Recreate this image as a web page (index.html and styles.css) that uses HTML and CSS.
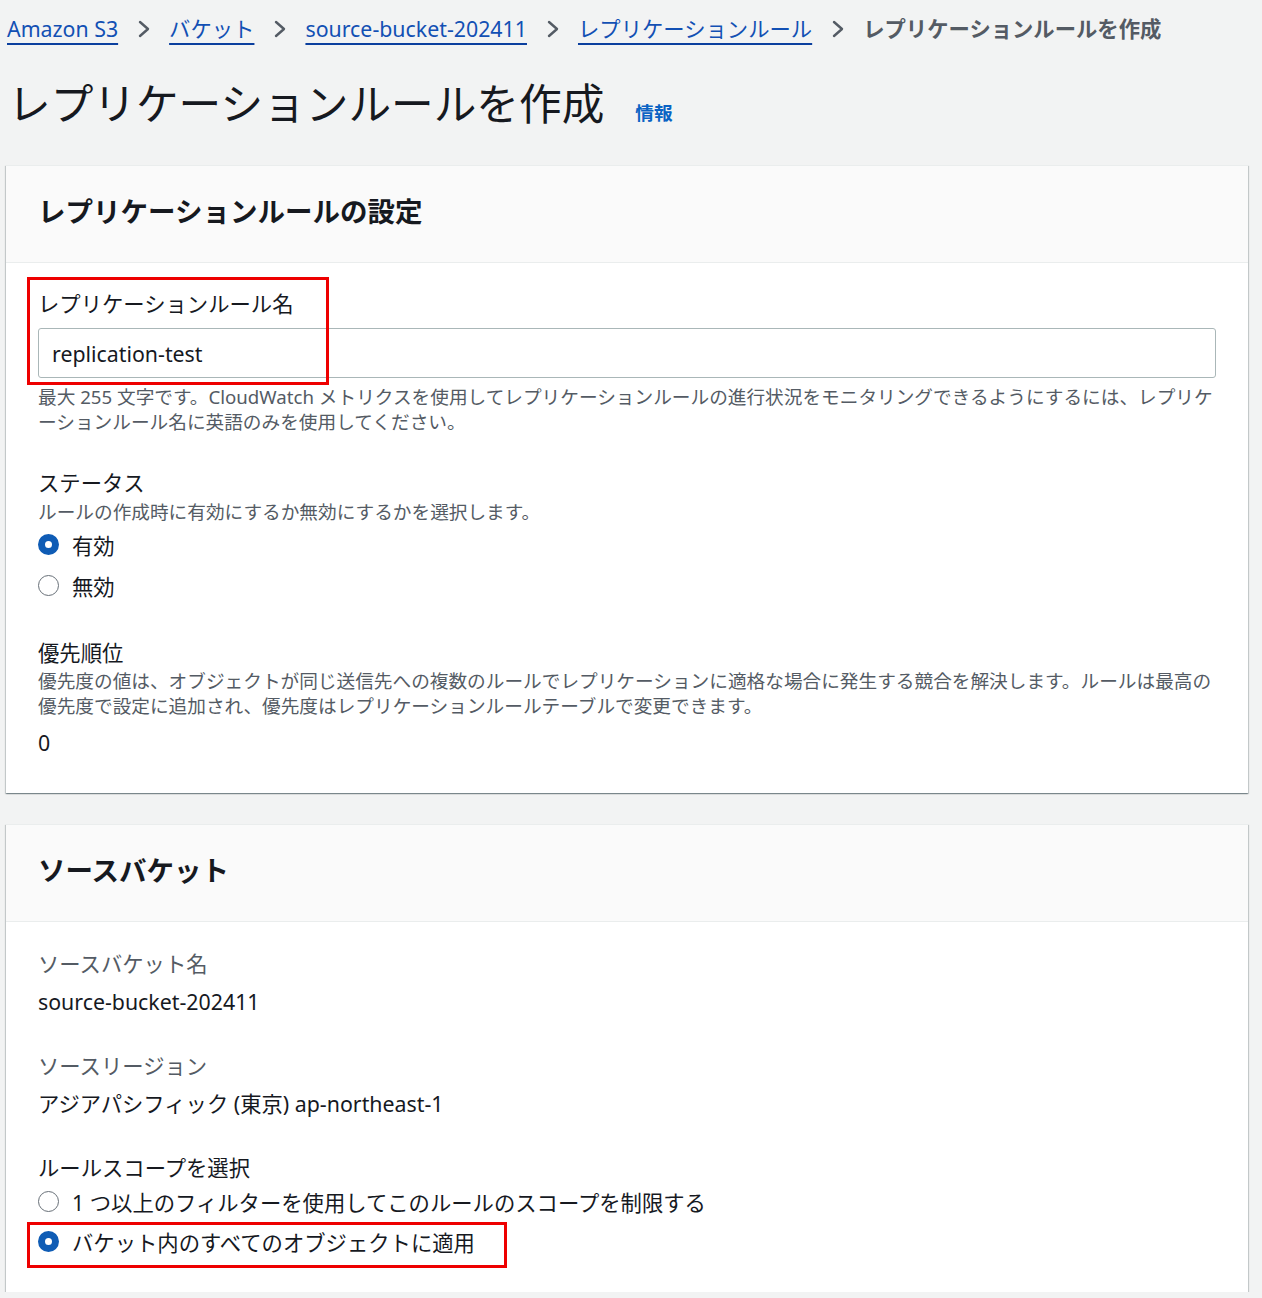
FILE: index.html
```html
<!DOCTYPE html>
<html lang="ja">
<head>
<meta charset="utf-8">
<title>レプリケーションルールを作成</title>
<link rel="stylesheet" href="styles.css">
</head>
<body>
<div class="page">
  <nav class="crumbs">
    <a class="crumb-link" href="#">Amazon S3</a>
    <span class="sep"><svg width="12" height="18" viewBox="0 0 12 18"><polyline points="2,2 10,9 2,16" fill="none" stroke="#545b64" stroke-width="2.4" stroke-linecap="round" stroke-linejoin="round"/></svg></span>
    <a class="crumb-link" href="#">バケット</a>
    <span class="sep"><svg width="12" height="18" viewBox="0 0 12 18"><polyline points="2,2 10,9 2,16" fill="none" stroke="#545b64" stroke-width="2.4" stroke-linecap="round" stroke-linejoin="round"/></svg></span>
    <a class="crumb-link" href="#">source-bucket-202411</a>
    <span class="sep"><svg width="12" height="18" viewBox="0 0 12 18"><polyline points="2,2 10,9 2,16" fill="none" stroke="#545b64" stroke-width="2.4" stroke-linecap="round" stroke-linejoin="round"/></svg></span>
    <a class="crumb-link" href="#">レプリケーションルール</a>
    <span class="sep"><svg width="12" height="18" viewBox="0 0 12 18"><polyline points="2,2 10,9 2,16" fill="none" stroke="#545b64" stroke-width="2.4" stroke-linecap="round" stroke-linejoin="round"/></svg></span>
    <span class="crumb-current">レプリケーションルールを作成</span>
  </nav>

  <div class="title-row">
    <h1 class="title">レプリケーションルールを作成</h1>
    <a class="info" href="#">情報</a>
  </div>

  <section class="panel panel-first">
    <header class="panel-head"><h2 class="panel-title">レプリケーションルールの設定</h2></header>
    <div class="panel-body">
      <div class="field field-name">
        <div class="label">レプリケーションルール名</div>
        <div class="input">replication-test</div>
        <div class="desc">最大 255 文字です。CloudWatch メトリクスを使用してレプリケーションルールの進行状況をモニタリングできるようにするには、レプリケーションルール名に英語のみを使用してください。</div>
        <span class="annot annot-name"></span>
      </div>

      <div class="field field-gap">
        <div class="label">ステータス</div>
        <div class="desc desc-tight">ルールの作成時に有効にするか無効にするかを選択します。</div>
        <div class="radios">
          <div class="radio-row"><span class="radio checked"></span><span class="radio-text">有効</span></div>
          <div class="radio-row"><span class="radio"></span><span class="radio-text">無効</span></div>
        </div>
      </div>

      <div class="field field-gap2">
        <div class="label">優先順位</div>
        <div class="desc desc-under-label">優先度の値は、オブジェクトが同じ送信先への複数のルールでレプリケーションに適格な場合に発生する競合を解決します。ルールは最高の優先度で設定に追加され、優先度はレプリケーションルールテーブルで変更できます。</div>
        <div class="value value-num">0</div>
      </div>
    </div>
  </section>

  <section class="panel panel-second">
    <header class="panel-head"><h2 class="panel-title">ソースバケット</h2></header>
    <div class="panel-body body-second">
      <div class="kv">
        <div class="key">ソースバケット名</div>
        <div class="value">source-bucket-202411</div>
      </div>
      <div class="kv kv-gap">
        <div class="key">ソースリージョン</div>
        <div class="value">アジアパシフィック (東京) ap-northeast-1</div>
      </div>
      <div class="field kv-gap">
        <div class="label">ルールスコープを選択</div>
        <div class="radios radios-scope">
          <div class="radio-row"><span class="radio"></span><span class="radio-text">1 つ以上のフィルターを使用してこのルールのスコープを制限する</span></div>
          <div class="radio-row radio-row-marked"><span class="radio checked"></span><span class="radio-text">バケット内のすべてのオブジェクトに適用</span><span class="annot annot-scope"></span></div>
        </div>
      </div>
    </div>
  </section>
</div>
</body>
</html>
```

FILE: styles.css
```css
* { box-sizing: border-box; }

html, body {
  margin: 0;
  padding: 0;
  background: #f2f3f3;
}

body {
  font-family: "Noto Sans", "Noto Sans CJK JP", sans-serif;
  color: #16191f;
  font-size: 21.33px;
}

.page {
  width: 1262px;
  padding: 14px 14px 0 6px;
}

/* breadcrumbs */
.crumbs {
  display: flex;
  align-items: center;
  height: 30px;
  padding-left: 1px;
  font-size: 21.33px;
  line-height: 30px;
  white-space: nowrap;
}

.crumb-link {
  color: #1250b4;
  text-decoration: underline;
  text-decoration-color: #0b3f9e;
  text-decoration-thickness: 2px;
  text-underline-offset: 6px;
}

.sep {
  display: inline-flex;
  align-items: center;
  padding: 0 19px 0 20px;
  height: 30px;
}

.crumb-current {
  color: #545b64;
  font-weight: 700;
}

/* title */
.title-row {
  display: flex;
  align-items: baseline;
  margin-top: 34px;
  height: 52px;
  padding-left: 2px;
}

.title {
  margin: 0;
  font-size: 42.67px;
  line-height: 52px;
  font-weight: 400;
  color: #16191f;
}

.info {
  margin-left: 31px;
  font-size: 18.67px;
  font-weight: 700;
  color: #0a63c4;
  text-decoration: none;
}

/* panels */
.panel {
  background: #ffffff;
  border-top: 1px solid #eaeded;
  box-shadow: 0 1px 1px 0 rgba(0, 28, 36, 0.3),
              1px 1px 1px 0 rgba(0, 28, 36, 0.15),
              -1px 1px 1px 0 rgba(0, 28, 36, 0.15);
}

.panel-first { margin-top: 35px; }
.panel-second { margin-top: 31px; }

.panel-head {
  background: #fafafa;
  border-bottom: 1px solid #eaeded;
  padding: 28px 32px 32px 32px;
}

.panel-title {
  margin: 0;
  font-size: 27.5px;
  line-height: 36px;
  font-weight: 700;
  color: #16191f;
}

.panel-body {
  padding: 26px 32px 35px 32px;
}

.body-second {
  padding-top: 27px;
  padding-bottom: 30px;
}

.field {
  position: relative;
}

.field-gap { margin-top: 34px; }
.field-gap2 { margin-top: 33px; }

.label {
  font-size: 21.33px;
  line-height: 30px;
  color: #16191f;
}

.input {
  margin-top: 9px;
  height: 50px;
  border: 1px solid #aab7b8;
  border-radius: 3px;
  background: #ffffff;
  padding: 0 13px;
  display: flex;
  align-items: center;
  font-size: 21.33px;
  color: #16191f;
}

.desc {
  margin-top: 7px;
  font-size: 18.67px;
  line-height: 24.5px;
  color: #545b64;
}

.desc-tight { margin-top: 2px; }
.desc-under-label { margin-top: 1px; }

.radios {
  margin-top: 0;
  display: flex;
  flex-direction: column;
}

.radios-scope { margin-top: -2px; }

.radio-row {
  position: relative;
  display: flex;
  align-items: center;
  height: 40px;
}

.radio-row + .radio-row { margin-top: 0.5px; }

.radio {
  flex: none;
  width: 21px;
  height: 21px;
  border-radius: 50%;
  border: 1.5px solid #687078;
  background: #ffffff;
}

.radio.checked {
  border: 7px solid #0f5cb5;
}

.radio-text {
  margin-left: 13px;
  font-size: 21.33px;
  color: #16191f;
  white-space: nowrap;
}

.value {
  font-size: 21.33px;
  line-height: 30px;
  color: #16191f;
}

.value-num { margin-top: 10px; }

.kv .key {
  font-size: 21.33px;
  line-height: 30px;
  color: #545b64;
}

.kv .value { margin-top: 8px; }

.kv-gap { margin-top: 34px; }

/* red annotation frames overlaying the content */
.annot {
  position: absolute;
  border: 3px solid #ee0000;
  pointer-events: none;
}

.annot-name {
  left: -11px;
  top: -12px;
  width: 302px;
  height: 108px;
}

.annot-scope {
  left: -11px;
  top: 0;
  width: 480px;
  height: 46px;
}
```
